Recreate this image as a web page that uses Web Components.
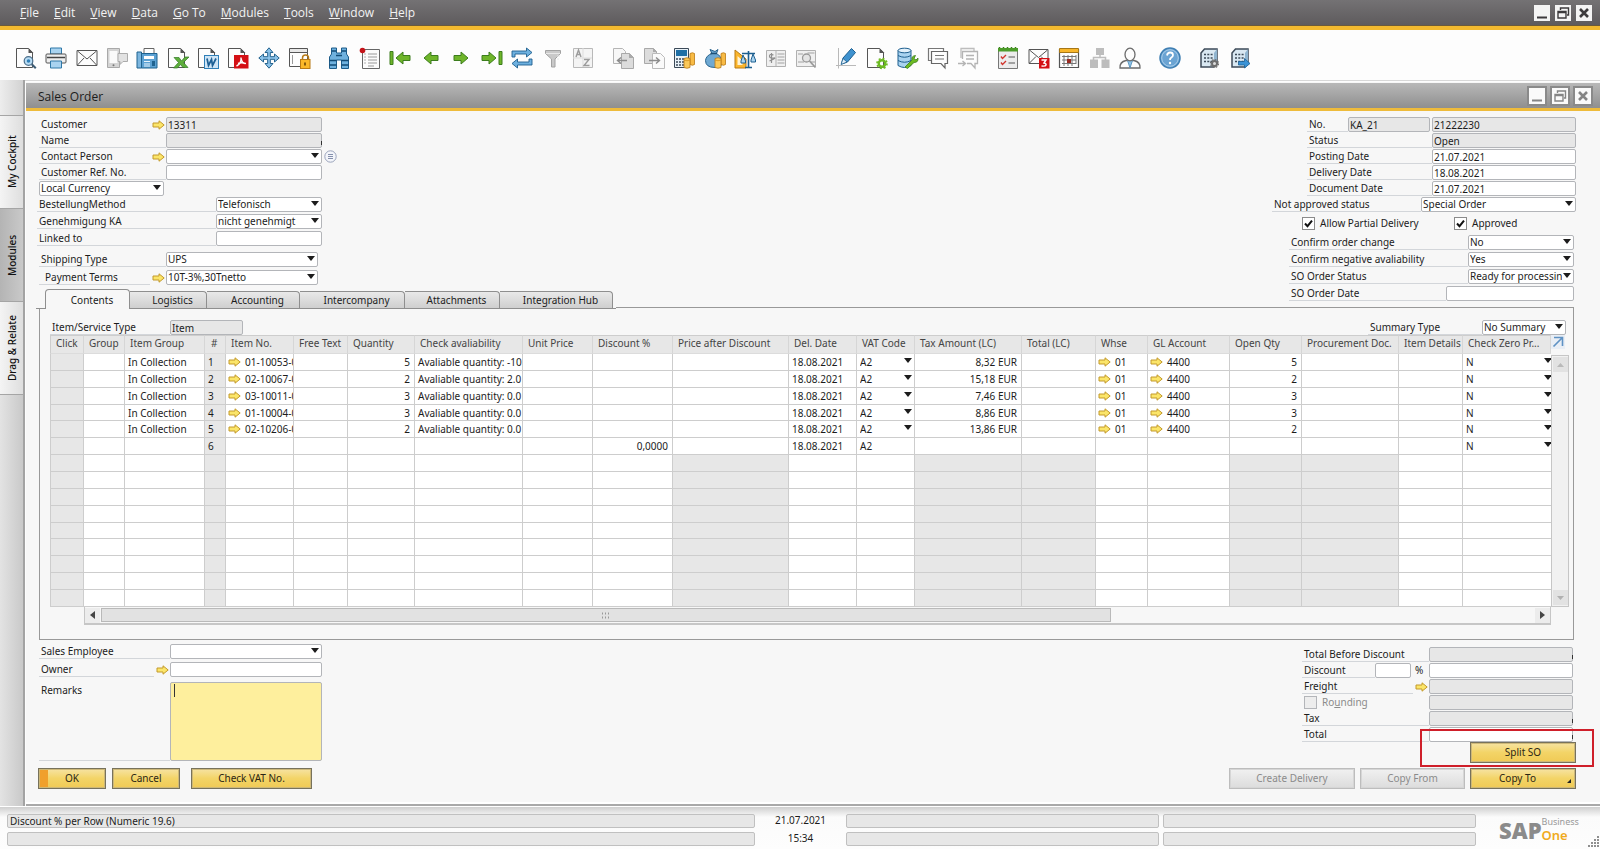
<!DOCTYPE html>
<html lang="en">
<head>
<meta charset="utf-8">
<title>Sales Order</title>
<style>
  html, body { margin: 0; }
  body {
    min-height: 100vh;
    display: flex;
    flex-direction: column;
    background: #fdfdfd;
    color: #1c1c1c;
    font: 10px/14px "Noto Sans", "Open Sans", sans-serif;
  }
  .desk { flex: 1; display: flex; padding-top: 1px; border-top: 1px solid #d8d8d8; }
  sb-window { flex: 1; min-width: 0; }
</style>
</head>
<body>
<sb-menu-bar></sb-menu-bar>
<sb-toolbar></sb-toolbar>
<div class="desk">
  <sb-side-tabs></sb-side-tabs>
  <sb-window heading="Sales Order">
    <sales-order></sales-order>
  </sb-window>
</div>
<sb-status-bar></sb-status-bar>

<script>
const define = (name, html) => customElements.define(name, class extends HTMLElement {
  connectedCallback() {
    if (this.shadowRoot) return;
    const t = document.createElement('template');
    t.innerHTML = typeof html === 'function' ? html(this) : html;
    this.attachShadow({ mode: 'open' }).append(t.content.cloneNode(true));
  }
});

/* ---------- small shared drawings ---------- */
const ARROW = `<svg width="13" height="10" viewBox="0 0 13 10" aria-hidden="true"><path d="M1 3h6V.8L12.2 5 7 9.2V7H1z" fill="#fbe569" stroke="#c39a2c" stroke-width="1"/></svg>`;
const CARET = `<svg class="caret" width="8" height="5" viewBox="0 0 8 5" aria-hidden="true"><path d="M0 0h8L4 5z" fill="#1c1c1c"/></svg>`;

/* ---------- window buttons ---------- */
define('sb-win-buttons', `
<style>
  :host { display: flex; gap: var(--gap, 5px); --s: 16px; color: #3c3a3c; }
  :host([inner]) { --s: 20px; --gap: 3px; color: #858585; }
  button { width: var(--s); height: var(--s); padding: 0; border: 0; background: #f4f4f4; color: inherit; display: grid; place-items: center; }
  :host([inner]) button { border: 2px solid #8a8a8a; box-sizing: border-box; background: #fafafa; }
  svg { display: block; }
</style>
<button aria-label="Minimize"><svg width="14" height="14" viewBox="0 0 14 14"><path d="M2 11.5h10" stroke="currentColor" stroke-width="2"/></svg></button>
<button aria-label="Restore"><svg width="14" height="14" viewBox="0 0 14 14"><path d="M4.500 4V2h8v7H11M2 5.500h8V12H2zM2 6.500h8" fill="none" stroke="currentColor" stroke-width="1.400"/></svg></button>
<button aria-label="Close"><svg width="14" height="14" viewBox="0 0 14 14"><path d="M3 3l8 8M11 3l-8 8" stroke="currentColor" stroke-width="2.600"/></svg></button>`);

/* ---------- menu bar ---------- */
define('sb-menu-bar', `
<style>
  :host { display: flex; align-items: center; justify-content: space-between; height: 26px; padding: 0 8px 0 20px;
    background: linear-gradient(#747274, #5d5a5c); border-bottom: 1px solid #c9982c; box-shadow: inset 0 -1px #6b5a3a; position: relative; }
  :host::after { content: ""; position: absolute; left: 0; right: 0; top: 100%; height: 4px; background: #f2b92f; }
  nav { display: flex; gap: 15px; font: 12px/26px "Open Sans", "Noto Sans", sans-serif; }
  a { color: #f3f3f3; text-decoration: none; }
</style>
<nav>
  <a href="#"><u>F</u>ile</a><a href="#"><u>E</u>dit</a><a href="#"><u>V</u>iew</a><a href="#"><u>D</u>ata</a><a href="#"><u>G</u>o To</a>
  <a href="#"><u>M</u>odules</a><a href="#"><u>T</u>ools</a><a href="#"><u>W</u>indow</a><a href="#"><u>H</u>elp</a>
</nav>
<sb-win-buttons></sb-win-buttons>`);

/* ---------- toolbar ---------- */
const page = (s = '#555') => `<path d="M1.500 1.500h12l4 4v15h-16z" fill="#fdfdfd" stroke="${s}"/><path d="M13.500 1v5h5z" fill="${s}"/>`;
const coins = `<path d="M17 6.500q2.500-1.500 4.500 0v11q-2 1.500-4.500 0z" fill="#f8bb45" stroke="#b97a14" stroke-width=".8"/><path d="M11 11.500q3-1.500 6 0v9q-3 1.500-6 0z" fill="#fbc95a" stroke="#b97a14" stroke-width=".8"/><path d="M11 13q3 1.500 6 0" fill="none" stroke="#d08f1c" stroke-width=".8"/>`;
const G = 'fill="#6fb52a" stroke="#3c7d1d" stroke-width="1"';
const server = `<path d="M2 6l3.500-4H18v14.500L15 20H2z" fill="#d9e8f2" stroke="#3c4a58" stroke-width="1.500"/><path d="M15 6l3-4v14l-3 3z" fill="#8fb4cf"/><path d="M5 7.500h9M5 11h9M5 14.500h9" stroke="#3c4a58" stroke-width="1.500" stroke-dasharray="2 1.300"/>`;
const grid = (c) => `<path d="M1.500 1.500h19v19h-19z" fill="#f4f4f4" stroke="${c}"/>`;
const ICONS = {
  preview: page() + `<circle cx="13.500" cy="14" r="4.300" fill="#b9dcf3" stroke="#4b6f8c" stroke-width="1.200"/><circle cx="13.500" cy="14" r="1.800" fill="#2f7fb8"/><path d="M16.800 17.300l4 4" stroke="#3d5c74" stroke-width="2"/>`,
  print: `<path d="M5.500 1h11v6h-11z" fill="#a9d3f0" stroke="#2f78a8"/><rect x="1" y="7" width="20" height="9" rx="1" fill="#efefef" stroke="#555"/><path d="M2 10.500h18" stroke="#444" stroke-width="1.500"/><path d="M5.500 14h11v7h-11z" fill="#a9d3f0" stroke="#2f78a8"/>`,
  mail: `<path d="M1 3.500h20v15H1z" fill="#fdfdfd" stroke="#555"/><path d="M1.500 4l9.500 8 9.500-8M1.500 18l6.500-7M20.500 18L14 11" fill="none" stroke="#555"/>`,
  sms: `<path d="M1.500 1.500h12v19h-12z" fill="#d4d4d4" stroke="#a9a9a9"/><path d="M3.500 4h8v12h-8z" fill="#fafafa"/><path d="M12 6.500h9.500v8H17l-3 3v-3h-2z" fill="#e2e2e2" stroke="#ababab"/><circle cx="7.500" cy="18.300" r="1" fill="#777"/>`,
  fax: `<path d="M8 1.500h10V8H8z" fill="#fff" stroke="#666"/><path d="M1 5h4.500v16H1z" fill="#7cb6df" stroke="#1f628f"/><path d="M5.500 6.500H21V21H5.500z" fill="#5ba1d3" stroke="#1f628f"/><path d="M8 9h10v3H8z" fill="#fff"/><path d="M8 14.500h6M8 17h6M8 19h6" stroke="#e8f3fb" stroke-width="1.200"/><path d="M16 14h3v5h-3z" fill="#1f628f"/>`,
  excel: page() + `<path d="M7 10.500h5l2.500 3.500 3.500-4h4l-5.500 5.500L21 20.500h-5l-2.500-3-3 3.500H6.500l5-5.500z" fill="#5fae3c" stroke="#2e7a22" stroke-width=".7"/>`,
  word: page() + `<rect x="7.500" y="8.500" width="14" height="13" fill="#cfe5f6" stroke="#2f7fb8"/><path d="M10 11.500l1.500 7 3-6 1 6 3.500-7" fill="none" stroke="#1c5f95" stroke-width="1.700"/>`,
  pdf: page() + `<rect x="7" y="8" width="14.500" height="13.500" fill="#d40f14"/><path d="M14 10.500c.5 4-1.500 7-4.500 8.500M14 11c.5 3.500 2 5.500 5 5.500M11 16.500q4-1.500 7 0" fill="none" stroke="#fff" stroke-width="1.400"/>`,
  move: `<path d="M11 .8l4 4.700h-2.700v4.200h4.200V7l4.700 4-4.700 4v-2.700h-4.200v4.200H15l-4 4.700-4-4.700h2.700v-4.200H5.500V15L.8 11l4.700-4v2.700h4.200V5.500H7z" fill="#8cc3ea" stroke="#22628e"/>`,
  lock: `<path d="M1.500 2.500h18v17h-18z" fill="#fdfdfd" stroke="#555"/><path d="M1.500 1.500h18v4h-18z" fill="#e8e8e8" stroke="#555"/><path d="M4.500 8v9" stroke="#999"/><path d="M14.500 13v-2a3 3 0 0 1 6 0v2" fill="none" stroke="#b87a16" stroke-width="1.500"/><rect x="12.500" y="12.500" width="9.500" height="9" fill="#fbb829" stroke="#b87a16"/><path d="M17 15.500v3" stroke="#6b4505" stroke-width="1.600"/>`,
  find: `<path d="M3.500 1h5v5h5V1h5v6l2 3v11.500h-7V13h-5v8.500h-7V10l2-3z" fill="#6fb1de" stroke="#1d5c8a"/><path d="M1.500 13.500h7M13.500 13.500h7M1.500 18h7M13.500 18h7M8 8.500h6M4 4h4M14 4h4" stroke="#134b75" stroke-width="1.300"/>`,
  list: `<path d="M3.500 2.500h17v19h-17z" fill="#fbfbfb" stroke="#666"/><path d="M9 7h9M9 10h9M9 13h9M9 16h9M9 19h6" stroke="#999"/><path d="M5.500 7h1M5.500 10h1M5.500 13h1M5.500 16h1" stroke="#666"/><circle cx="3.500" cy="3.500" r="2.800" fill="#c4141a"/>`,
  first: `<path d="M1 4.500h3v13H1z" ${G}/><path d="M7 11l7-6V8.500h7v5h-7V17z" ${G}/>`,
  prev: `<path d="M4 11l7-6V8.500h7v5h-7V17z" ${G}/>`,
  next: `<path d="M18 11l-7-6V8.500H4v5h7V17z" ${G}/>`,
  last: `<path d="M18 4.500h3v13h-3z" ${G}/><path d="M15 11L8 5V8.500H1v5h7V17z" ${G}/>`,
  refresh: `<path d="M1 10V4h14.500V1L21 5.500 15.500 10V7H4v3z" fill="#6db0df" stroke="#1d5f8f" stroke-width=".9"/><path d="M21 12v6H6.500v3L1 16.500 6.500 12v3H18v-3z" fill="#6db0df" stroke="#1d5f8f" stroke-width=".9"/>`,
  filter: `<path d="M3.500 3.500h15v3L13 12v8h-3.500v-8L3.500 6.500z" fill="#c9c9c9" stroke="#a2a2a2"/><path d="M4 6.500h14M15 9h3M15 12h2" stroke="#e8e8e8"/>`,
  sort: grid('#b9b9b9') + `<path d="M11 1v19M1 11h19" stroke="#ddd"/><path d="M4 10l2.500-7L9 10M5 7.500h3" fill="none" stroke="#9b9b9b" stroke-width="1.400"/><path d="M12 12.500h5l-5 6h5.500" fill="none" stroke="#9b9b9b" stroke-width="1.400"/>`,
  copyfrom: `<path d="M1.500 1.500h9l3 3v12h-12z" fill="#f7f7f7" stroke="#b5b5b5"/><path d="M9.500 6.500h8l4 4v11h-12z" fill="#dcdcdc" stroke="#a9a9a9"/><path d="M17 6v5h5z" fill="#aaa"/><path d="M15 13.500H6M9 10.500l-3.500 3L9 16.500" fill="none" stroke="#8c8c8c" stroke-width="1.400"/>`,
  copyto: `<path d="M1.500 1.500h9l3 3v12h-12z" fill="#dcdcdc" stroke="#a9a9a9"/><path d="M10 1v4h4z" fill="#aaa"/><path d="M9.500 6.500h8l4 4v11h-12z" fill="#fafafa" stroke="#bbb"/><path d="M6 13.500h10M13 10.500l3.500 3-3.500 3" fill="none" stroke="#8c8c8c" stroke-width="1.400"/>`,
  calc: `<path d="M1.500 1.500h14v19h-14z" fill="#e9f2f8" stroke="#3c4a58"/><path d="M3 3h11v6H3z" fill="#1f6fa5"/><path d="M3 12h8M3 15h8M3 18h8" stroke="#3c4a58" stroke-width="1.500" stroke-dasharray="2 1"/>` + coins,
  profit: `<path d="M6 2.500l5 2 3-2-1.500 4q5 2.500 5.500 9 0 5-7 5-9.500 0-9.500-7 .5-5 6.500-7z" fill="#6fa9d3" stroke="#2a658f"/><path d="M6.500 6.500h6.500" stroke="#1d5077" stroke-width="1.500"/>` + coins,
  scale: `<path d="M1 3l11 9v9H1z" fill="#fbb62c" stroke="#b97a14"/><path d="M3.500 9l5 4.500v4.500h-5z" fill="#fff3d5"/><path d="M8 6.500h13M14.500 4v16M11 20.500h7" stroke="#1d5f8f" stroke-width="1.600"/><path d="M7 14l2-6 2.500 6v2H7zM17 13l2-6 2.500 6v2H17z" fill="#a9d3f0" stroke="#1d5f8f"/>`,
  ledger: `<path d="M1.500 3.500h19v16h-19z" fill="#f0f0f0" stroke="#b0b0b0"/><path d="M11 4v15" stroke="#b0b0b0"/><path d="M12.500 7h7M12.500 10h7M12.500 13h7M12.500 16h7" stroke="#bcbcbc" stroke-width="1.500"/><path d="M8.500 8q-4-1.500-4 1t4 2-4 3M6.500 6v10" fill="none" stroke="#8f8f8f" stroke-width="1.200"/>`,
  ledgerfind: `<path d="M1.500 3.500h19v16h-19z" fill="#f0f0f0" stroke="#b0b0b0"/><path d="M3 7h5M12.500 6h7M3 15h6M16 15h4" stroke="#bcbcbc" stroke-width="1.500"/><circle cx="11.500" cy="11" r="4" fill="#e4e4e4" stroke="#999" stroke-width="1.300"/><path d="M14.500 14l6 6.500" stroke="#999" stroke-width="1.800"/>`,
  edit: `<path d="M3.500 1v20.500M1 18.500h20" stroke="#b9b9b9"/><path d="M8 11L16.500 1.500l4 4L12.500 15l-6 2z" fill="#3f92cf" stroke="#1d5f8f"/><path d="M6 17.500l2-6 4 3.500z" fill="#e0eef8" stroke="#1d5f8f" stroke-width=".8"/>`,
  newdoc: page() + `<circle cx="16" cy="16.500" r="3.300" fill="none" stroke="#6dbb22" stroke-width="2.400"/><circle cx="16" cy="16.500" r="5" fill="none" stroke="#6dbb22" stroke-width="1.600" stroke-dasharray="2 1.900"/>`,
  dbtool: `<path d="M2 3.500v15q6.500 4 13 0v-15z" fill="#a9d3f0" stroke="#1d5f8f"/><ellipse cx="8.500" cy="3.500" rx="6.500" ry="2.300" fill="#e3f1fb" stroke="#1d5f8f"/><path d="M2 8.500q6.500 3.500 13 0M2 13.500q6.500 3.500 13 0" fill="none" stroke="#1d5f8f"/><path d="M9 20l7-7q-1-4 3.500-4.500l-1.500 3 2 1.500 2-2q.5 4.500-4 4.500l-6.500 6z" fill="#6dbb22" stroke="#3c7d1d" stroke-width=".8"/>`,
  chat: `<path d="M4 13.500H1.500v-12h15V4" fill="none" stroke="#777" stroke-width="1.200"/><path d="M4.500 4.500h16v12H18V21l-4-4.500H4.500z" fill="#fdfdfd" stroke="#666" stroke-width="1.200"/><path d="M8 8.500h9M8 12h9" stroke="#777" stroke-width="1.200"/>`,
  chatto: `<path d="M4 11V1.500h13V4" fill="none" stroke="#bdbdbd" stroke-width="1.300"/><path d="M5.500 12V4.500h15v12H18V21l-4-4.500h-4" fill="none" stroke="#b4b4b4" stroke-width="1.300"/><path d="M9 8.500h8M9 12h8M1 16.500h7M5.500 14l3 2.500-3 2.500" fill="none" stroke="#b4b4b4" stroke-width="1.300"/>`,
  tasks: `<path d="M1.500 2.500h19v19h-19z" fill="#ececec" stroke="#777"/><path d="M1 1h20v3.500H1z" fill="#4c9c2a"/><path d="M2.500 1v-1M6.500 1v-1M10.500 1v-1M14.500 1v-1M18.500 1v-1" stroke="#3c7d1d" stroke-width="1.500"/><path d="M4 9.500l1.500 2L9 8M4 15.500l1.500 2L9 14" fill="none" stroke="#d0342c" stroke-width="1.400"/><path d="M11.500 10h6.500M11.500 16h6.500" stroke="#888" stroke-width="1.300"/>`,
  inbox: `<path d="M1 2.500h19v14H1z" fill="#fdfdfd" stroke="#555"/><path d="M1.500 3l9 7.500 9-7.500M1.500 16L8 9.500M19.500 16L13 9.500" fill="none" stroke="#555"/><rect x="11" y="11" width="10.500" height="10.500" fill="#d40f14"/><path d="M13.500 13h4.500l-2 3q2.500.5 2 2t-4.500 1" fill="none" stroke="#fff" stroke-width="1.500"/>`,
  calendar: `<path d="M1.500 2.500h19v18h-19z" fill="#fdfdfd" stroke="#555" stroke-width="1.200"/><path d="M1.500 1.500h19v4h-19z" fill="#f8b62a" stroke="#a77717"/><path d="M4 9.500h14M4 13h14M4 16.500h14M6 8v11M10 8v11M14 8v11M18 8v9" stroke="#777"/><path d="M9 12h4v4H9z" fill="#9a2a22"/>`,
  org: `<path d="M7 1h8v7H7zM1 12.500h8V21H1zM12.500 12.500h8V21h-8z" fill="#bdbdbd"/><path d="M11 8v3M4.500 13v-2.500h12V13" fill="none" stroke="#bdbdbd" stroke-width="1.500"/>`,
  person: `<path d="M1 21q-.5-6 6-7.500h8q6.500 1.500 6 7.500z" fill="#fdfdfd" stroke="#6b6b6b" stroke-width="1.300"/><path d="M8.500 13.500L11 21l2.500-7.500z" fill="#8cc3ea" stroke="#4d86b0" stroke-width=".8"/><ellipse cx="11" cy="7.500" rx="5" ry="6.300" fill="#fdfdfd" stroke="#6b6b6b" stroke-width="1.300"/>`,
  help: `<circle cx="11" cy="11" r="10" fill="#6ba4d3" stroke="#3f7fb3" stroke-width="1.500"/><circle cx="11" cy="11" r="8.300" fill="none" stroke="#a9cdea"/><path d="M8 8.500q.5-3 3.200-3t2.800 2.500q0 1.500-1.600 2.500T11 13" fill="none" stroke="#fff" stroke-width="1.800"/><circle cx="11" cy="16" r="1.200" fill="#fff"/>`,
  serverset: server + `<circle cx="15.500" cy="16.500" r="2.500" fill="#ddd" stroke="#6e6e6e" stroke-width="2"/><circle cx="15.500" cy="16.500" r="4" fill="none" stroke="#6e6e6e" stroke-width="1.200" stroke-dasharray="1.800 1.300"/>`,
  servergo: server + `<path d="M8.500 14.500h6v-3l5.500 5-5.500 4.500v-3h-6z" fill="#3b93d6" stroke="#1c5f95" stroke-width=".8"/>`
};
define('sb-tool', (el) => `
<style>
  :host { display: block; }
  button { display: block; width: 22px; height: 22px; padding: 0; border: 0; background: none; }
  svg { display: block; overflow: visible; }
</style>
<button aria-label="${el.getAttribute('icon')}"><svg width="22" height="22" viewBox="0 0 22 22">${ICONS[el.getAttribute('icon')]}</svg></button>`);

const GROUPS = [
  [295, 'preview print mail sms fax excel word pdf move lock'],
  [266, 'find list first prev next last refresh filter sort'],
  [205, 'copyfrom copyto calc profit scale ledger ledgerfind'],
  [144, 'edit newdoc dbtool chat chatto'],
  [144, 'tasks inbox calendar org person'],
  [22, 'help'],
  [53, 'serverset servergo']
];
define('sb-toolbar', `
<style>
  :host { display: flex; align-items: center; gap: 18px; box-sizing: border-box; padding: 9px 15px 0; height: 53px; background: #fdfdfd; }
  div { display: flex; justify-content: space-between; }
</style>` + GROUPS.map(([w, names]) =>
  `<div style="width:${w}px">${names.split(' ').map(n => `<sb-tool icon="${n}"></sb-tool>`).join('')}</div>`).join(''));

/* ---------- vertical tabs on the left ---------- */
define('sb-side-tabs', `
<style>
  :host { display: flex; flex-direction: column; width: 23px; padding-top: 35px; margin: -2px 1px 0 0; border-right: 2px solid #a3a3a3;
    background: linear-gradient(90deg, #ededed, #d2d2d2); }
  button { width: 23px; height: 93px; padding: 0; border: 0; border-bottom: 1px solid #a5a5a5; background: linear-gradient(90deg, #dedede, #f4f4f4);
    color: #111; font: 500 10px/22px "Noto Sans", sans-serif; writing-mode: vertical-rl; transform: rotate(180deg); }
  button.on { background: linear-gradient(90deg, #c9c9c9, #b4b4b4); }
  .rest { flex: 1; border-top: 1px solid #a5a5a5; background: linear-gradient(90deg, #e3e3e3, #c9c9c9); }
</style>
<button>My Cockpit</button><button class="on">Modules</button><button>Drag &amp; Relate</button><div class="rest"></div>`);

/* ---------- window frame ---------- */
define('sb-window', (el) => `
<style>
  :host { display: flex; flex-direction: column; background: #f7f7f7; border-bottom: 2px solid #a9a9a9; }
  header { display: flex; align-items: center; justify-content: space-between; height: 25px; padding: 0 7px 0 12px; margin-top: 1px;
    background: linear-gradient(#b8b8b8, #8f8f8f); border-bottom: 3px solid #eebb3b; }
  h1 { margin: 0; padding-top: 2px; font: 12px/22px "Open Sans", "Noto Sans", sans-serif; }
  main { flex: 1; border-bottom: 2px solid #fff; }
</style>
<header><h1>${el.getAttribute('heading')}</h1><sb-win-buttons inner></sb-win-buttons></header>
<main><slot></slot></main>`);

/* ---------- labelled field ---------- */
let uid = 0;
define('sb-field', (el) => {
  const a = (n) => el.getAttribute(n), has = (n) => el.hasAttribute(n), id = 'f' + (++uid);
  const control = has('select')
    ? `<select id="${id}"><option>${a('value') || ''}</option></select>${CARET}`
    : `<input id="${id}" value="${a('value') || ''}" ${has('off') ? 'readonly' : ''}>`;
  const name = a('label')
    ? (has('tick') ? `<span class="label"><input type="checkbox" id="${id}k" disabled><label class="dim" for="${id}k">${a('label')}</label></span>` : `<label class="label" for="${id}">${a('label')}</label>`)
    : '';
  return `
<style>
  :host { display: flex; align-items: stretch; height: 15px; position: relative; color: #1c1c1c; --w: 156px; }
  :host([narrow]) { width: 125px; --w: 125px; }
  .label { flex: 1; min-width: 0; white-space: nowrap; padding-left: 2px; border-bottom: 1px solid #d3d6da; line-height: 14px; height: 14px; display: flex; align-items: center; }
  :host([indent]) .label { padding-left: 6px; }
  :host([tick]) .label { border-color: transparent; gap: 5px; }
  .dim { color: #8b8b8b; }
  .go { padding: 0; border: 0; background: none; width: 16px; display: grid; place-items: center; }
  .ctl { position: relative; width: var(--w); }
  input, select { box-sizing: border-box; width: 100%; height: 15px; margin: 0; padding: 0 1px; border: 1px solid #b3b5b9; border-radius: 2px; background: #fff;
    color: inherit; font: inherit; line-height: 13px; appearance: none; outline: 0; display: block; }
  select { padding: 0 11px 0 1px; }
  input[type=checkbox] { width: 13px; height: 13px; background: #ededed; border-radius: 0; padding: 0; }
  :host([off]) .ctl input, .pre.off { background: #e7e7e7; }
  .caret { position: absolute; right: 3px; top: 4px; pointer-events: none; }
  .pre { width: 82px; margin-right: 2px; }
  .pre.pct { width: 36px; margin-right: 4px; }
  .unit { width: 14px; }
  .list { position: absolute; left: 100%; top: 1px; margin-left: 2px; padding: 0; border: 0; background: none; }
  :host([mark]) .ctl::after { content: ""; position: absolute; right: 0; bottom: 3px; width: 1px; height: 4px; background: #333; }
  svg { display: block; }
</style>
${name}
${a('pre') ? `<input class="pre off" aria-label="Series" value="${a('pre')}" readonly>` : ''}
${has('pct') ? `<input class="pre pct" aria-label="Discount percent"><span class="unit">%</span>` : ''}
${has('go') ? `<button class="go" aria-label="Open record">${ARROW}</button>` : ''}
<div class="ctl">${control}</div>
${has('list') ? `<button class="list" aria-label="Choose from list"><svg width="13" height="13" viewBox="0 0 13 13"><circle cx="6.500" cy="6.500" r="5.700" fill="#f3f5fa" stroke="#9aa3bb"/><path d="M4 4.500h5M4 6.500h5M4 8.500h5" stroke="#8590ad"/></svg></button>` : ''}`;
});

/* ---------- tick box ---------- */
define('sb-check', `
<style>
  :host { display: block; }
  label { display: flex; align-items: center; gap: 5px; }
  span { position: relative; display: block; width: 13px; height: 13px; }
  input { appearance: none; box-sizing: border-box; width: 13px; height: 13px; margin: 0; border: 1px solid #8b8b8b; background: #fff; display: block; }
  svg { position: absolute; left: 0; top: 0; pointer-events: none; }
</style>
<label><span><input type="checkbox" checked><svg width="13" height="13" viewBox="0 0 13 13"><path d="M3 6.500l2.500 2.700 4.500-5.500" fill="none" stroke="#111" stroke-width="2"/></svg></span><slot></slot></label>`);

/* ---------- push button ---------- */
define('sb-button', (el) => `
<style>
  :host { display: block; }
  button { box-sizing: border-box; width: 100%; height: 21px; padding: 0; border: 1px solid #77725c; background: linear-gradient(#f6e3a3, #f3d467 50%, #f0ca55);
    color: #2b2615; font: inherit; line-height: 17px; position: relative; display: block; box-shadow: inset 0 0 0 1px #cdb878; }
  :host([primary]) button { background: linear-gradient(90deg, #f0a02c 9px, transparent 9px), linear-gradient(#f6e3a3, #f3d467 50%, #f0ca55); }
  button:disabled { border-color: #bdbdbd; background: linear-gradient(#f1f1f1, #dcdcdc); color: #8b8b8b; box-shadow: inset 0 0 0 1px #d6d6d6; }
  :host([menu]) button { padding-right: 11px; }
  :host([menu]) button::after { content: ""; position: absolute; right: 4px; bottom: 5px; border: 2px solid #222; border-top-color: transparent; border-left-color: transparent; }
</style>
<button ${el.hasAttribute('off') ? 'disabled' : ''}><slot></slot></button>`);

/* ---------- tab strip ---------- */
define('sb-tabs', `
<style>
  :host { display: flex; align-items: flex-end; height: 18px; padding: 0 3px 0 9px; background: #f7f7f7; border-bottom: 1px solid #8f8f8f; position: relative; z-index: 1; }
  button { box-sizing: border-box; height: 17px; padding: 0 0 0 9px; border: 1px solid #8f8f8f; border-width: 1px 1px 0 0; border-radius: 0 4px 0 0;
    background: linear-gradient(#e9e9e9, #cfcfcf); color: #1c1c1c; font: inherit; line-height: 14px; }
  button.on { height: 20px; margin-bottom: -1px; border-left-width: 1px; border-radius: 4px 4px 0 0; background: #f7f7f7; }
</style>
<button class="on" style="width:85px">Contents</button><button style="width:77px">Logistics</button><button style="width:93px">Accounting</button><button style="width:105px">Intercompany</button><button style="width:95px">Attachments</button><button style="width:113px">Integration Hub</button>`);

/* ---------- item grid ---------- */
const COLS = [
  ['Click', 34, 'g'], ['Group', 41], ['Item Group', 80], ['#', 21, 'g'], ['Item No.', 68], ['Free Text', 54], ['Quantity', 67],
  ['Check avaliability', 108], ['Unit Price', 70], ['Discount %', 80], ['Price after Discount', 116, 'e'], ['Del. Date', 68], ['VAT Code', 58],
  ['Tax Amount (LC)', 107, 'e'], ['Total (LC)', 74, 'e'], ['Whse', 52], ['GL Account', 82], ['Open Qty', 72, 'e'], ['Procurement Doc.', 97, 'e'],
  ['Item Details', 64], ['Check Zero Pr...', 88]
];
const link = (t) => `<a href="#">${ARROW}<span>${t}</span></a>`;
const drop = (t, label) => `<span class="drop"><select aria-label="${label}"><option>${t}</option></select>${CARET}</span>`;
const ITEMS = [
  ['01-10053-0', 5, '-10', '8,32'], ['02-10067-0', 2, '2.0', '15,18'], ['03-10011-0', 3, '0.0', '7,46'],
  ['01-10004-0', 3, '0.0', '8,86'], ['02-10206-0', 2, '0.0', '13,86']
];
const rows = ITEMS.map(([no, q, av, tax], i) => ({
  2: 'In Collection', 3: i + 1, 4: link(no), 6: q, 7: 'Avaliable quantity: ' + av, 11: '18.08.2021', 12: drop('A2', 'VAT Code'),
  13: tax + ' EUR', 15: link('01'), 16: link('4400'), 17: q, 20: drop('N', 'Check zero price')
}));
rows.push({ 3: 6, 9: '0,0000', 11: '18.08.2021', 12: 'A2', 20: drop('N', 'Check zero price') });
while (rows.length < 15) rows.push({});
const NUM = [6, 9, 13, 17];
define('item-grid', `
<style>
  :host { display: grid; grid-template-columns: 1fr 18px; }
  table { width: 100%; height: 272px; border-collapse: separate; border-spacing: 0; table-layout: fixed; }
  th, td { box-sizing: border-box; padding: 0 4px 0 3px; border: 1px solid #cdcdcd; border-width: 0 1px 1px 0; overflow: hidden; white-space: nowrap; text-align: left; font-weight: normal; line-height: 14px; background: #fff; }
  td { height: 16px; }
  th { height: 19px; padding: 0 0 0 5px; vertical-align: top; background: #e7e7e7; color: #444; border-top-width: 1px; border-bottom-color: #dcdcdc; border-right-color: #d6d6d6; }
  th:first-child, td:first-child { border-left-width: 1px; }
  th:nth-child(4) { padding-left: 6px; }
  td.g { background: #e7e7e7; }
  td.n { text-align: right; }
  td:nth-child(5), td:nth-child(13), td:nth-child(21) { padding-right: 0; }
  td:nth-child(21) { border-right: 0; }
  a { display: flex; align-items: center; gap: 4px; margin-left: -1px; color: inherit; text-decoration: none; }
  a svg { flex: none; }
  .drop { position: relative; display: block; }
  .drop select { width: 100%; height: 14px; margin: 0; padding: 0; border: 0; background: none; font: inherit; color: inherit; appearance: none; display: block; }
  .drop .caret { position: absolute; right: 2px; top: 3px; }
  td:nth-child(21) .caret { right: -1px; }
  .side { display: flex; flex-direction: column; }
  .expand { width: 14px; height: 14px; margin: 0 0 6px 0; padding: 0; border: 0; background: #e9eef5; }
  .v { flex: 1; display: flex; flex-direction: column; justify-content: space-between; border: 1px solid #c6c6c6; background: #f1f1f1; padding: 1px; }
  .v button, .h button { width: 15px; height: 15px; padding: 0; border: 0; background: #e2e2e2; display: grid; place-items: center; }
  .h { display: flex; align-items: center; height: 16px; margin-left: 34px; border: 1px solid #c6c6c6; border-width: 0 1px 2px 1px; background: #f7f7f7; }
  .h button { background: #ececec; }
  .track { flex: 1; padding: 0 1px; }
  .thumb { box-sizing: border-box; width: 1010px; max-width: 71%; height: 14px; border: 1px solid #b9b9b9; background: #e2e2e2; display: grid; place-items: center; }
  svg { display: block; }
</style>
<table>
  <colgroup>${COLS.map(c => `<col style="width:${c[1]}px">`).join('')}</colgroup>
  <thead><tr>${COLS.map(c => `<th>${c[0]}</th>`).join('')}</tr></thead>
  <tbody>${rows.map((r, i) => `<tr>${COLS.map((c, j) => {
    const k = (c[2] === 'g' || (c[2] === 'e' && i > 5) ? 'g ' : '') + (NUM.includes(j) ? 'n' : '');
    return `<td class="${k}">${r[j] ?? ''}</td>`;
  }).join('')}</tr>`).join('')}</tbody>
</table>
<div class="side">
  <button class="expand" aria-label="Expand"><svg width="14" height="14" viewBox="0 0 14 14"><path d="M3 2.500h8.500V11M11 3L2.500 11.500" fill="none" stroke="#5f92c4" stroke-width="1.600"/></svg></button>
  <div class="v">
    <button aria-label="Scroll up"><svg width="7" height="4" viewBox="0 0 7 4"><path d="M0 4l3.500-4L7 4z" fill="#b9b9b9"/></svg></button>
    <button aria-label="Scroll down"><svg width="7" height="4" viewBox="0 0 7 4"><path d="M0 0h7L3.500 4z" fill="#b0b0b0"/></svg></button>
  </div>
</div>
<div class="h">
  <button aria-label="Scroll left"><svg width="5" height="8" viewBox="0 0 5 8"><path d="M5 0v8L0 4z" fill="#444"/></svg></button>
  <div class="track"><div class="thumb"><svg width="9" height="7" viewBox="0 0 9 7"><path d="M0 1.500h9M0 5.500h9" stroke="#999" stroke-width="2" stroke-dasharray="1 2"/></svg></div></div>
  <button aria-label="Scroll right"><svg width="5" height="8" viewBox="0 0 5 8"><path d="M0 0v8l5-4z" fill="#444"/></svg></button>
</div>`);

/* ---------- the sales order form ---------- */
define('sales-order', `
<style>
  :host { display: block; padding: 6px 24px 10px 10px; }
  .top { display: grid; grid-template: auto auto / auto 1fr auto; }
  .left { width: 288px; height: 173px; }
  .right { grid-area: 1 / 3 / 3 / 4; display: flex; flex-direction: column; align-items: flex-end; height: 187px; }
  .g { display: flex; flex-direction: column; gap: 1px; }
  .roomy { gap: 2px; }
  .cust { margin-left: 3px; width: 283px; }
  .order { margin: 1px 0 6px 1px; width: 285px; }
  .ship { margin-left: 3px; width: 279px; gap: 3px; }
  .order sb-field { --w: 106px; }
  .ship sb-field { --w: 152px; }
  .dates { width: 269px; }
  .dates sb-field { --w: 144px; }
  .appr { width: 304px; margin-top: 1px; --w: 155px; }
  .checks { display: flex; width: 274px; margin: 4px 0 5px; }
  .checks sb-check:first-child { width: 152px; }
  .confirm { width: 285px; margin-right: 2px; }
  .confirm sb-field { --w: 106px; }
  .confirm sb-field:last-child { --w: 128px; }
  sb-tabs { grid-row: 2; }
  .panel { border: 1px solid #999; margin: -2px 2px 0 3px; padding: 12px 4px 14px 10px; }
  .bar { display: flex; justify-content: space-between; }
  .bar sb-field { --w: 73px; width: 193px; }
  .bar sb-field:last-child { --w: 84px; width: 198px; margin-right: 3px; }
  .bottom { display: flex; justify-content: space-between; padding-top: 4px; }
  .emp { width: 283px; margin-left: 3px; gap: 3px; }
  .emp sb-field { --w: 152px; }
  .remarks { display: flex; margin-top: 2px; }
  .remarks label { flex: 1; padding: 1px 0 0 2px; border-bottom: 1px solid #d3d6da; }
  textarea { box-sizing: border-box; width: 152px; height: 79px; margin: 0; padding: 3px 6px; border: 1px solid #b3b5b9; border-radius: 2px; resize: none; font: inherit; outline: 0; display: block;
    background: linear-gradient(#333, #333) 3px 1px / 1px 13px no-repeat #feef9d; }
  .btns { display: flex; margin: 7px 0 0 2px; gap: 6px; }
  .far { margin-left: 5px; }
  .sum { width: 271px; margin: 3px 3px 0 0; }
  .sum sb-field { --w: 144px; }
  .r { display: flex; flex-direction: column; align-items: flex-end; }
  .r .btns { gap: 5px; margin-top: 5px; }
  .split { position: relative; width: 106px; }
  .split::after { content: ""; position: absolute; inset: -13px -18px -4px -50px; border: 2px solid #cf1f2a; pointer-events: none; }
</style>
<div class="top">
  <div class="left">
    <div class="g cust">
      <sb-field label="Customer" value="13311" off go></sb-field>
      <sb-field label="Name" off mark></sb-field>
      <sb-field label="Contact Person" select go list></sb-field>
      <sb-field label="Customer Ref. No."></sb-field>
      <sb-field select value="Local Currency" narrow></sb-field>
    </div>
    <div class="g roomy order">
      <sb-field label="BestellungMethod" select value="Telefonisch"></sb-field>
      <sb-field label="Genehmigung KA" select value="nicht genehmigt"></sb-field>
      <sb-field label="Linked to"></sb-field>
    </div>
    <div class="g ship">
      <sb-field label="Shipping Type" select value="UPS"></sb-field>
      <sb-field label="Payment Terms" select value="10T-3%,30Tnetto" go indent></sb-field>
    </div>
  </div>
  <sb-tabs></sb-tabs>
  <div class="right">
    <div class="g dates">
      <sb-field label="No." pre="KA_21" value="21222230" off></sb-field>
      <sb-field label="Status" value="Open" off></sb-field>
      <sb-field label="Posting Date" value="21.07.2021"></sb-field>
      <sb-field label="Delivery Date" value="18.08.2021"></sb-field>
      <sb-field label="Document Date" value="21.07.2021"></sb-field>
    </div>
    <sb-field class="appr" label="Not approved status" select value="Special Order"></sb-field>
    <div class="checks"><sb-check>Allow Partial Delivery</sb-check><sb-check>Approved</sb-check></div>
    <div class="g roomy confirm">
      <sb-field label="Confirm order change" select value="No"></sb-field>
      <sb-field label="Confirm negative avaliability" select value="Yes"></sb-field>
      <sb-field label="SO Order Status" select value="Ready for processing"></sb-field>
      <sb-field label="SO Order Date"></sb-field>
    </div>
  </div>
</div>
<div class="panel">
  <div class="bar">
    <sb-field label="Item/Service Type" value="Item" off></sb-field>
    <sb-field label="Summary Type" select value="No Summary"></sb-field>
  </div>
  <item-grid></item-grid>
</div>
<div class="bottom">
  <div>
    <div class="g emp">
      <sb-field label="Sales Employee" select></sb-field>
      <sb-field label="Owner" go></sb-field>
      <div class="remarks"><label for="rem">Remarks</label><textarea id="rem"></textarea></div>
    </div>
    <div class="btns">
      <sb-button primary style="width:68px">OK</sb-button><sb-button style="width:68px">Cancel</sb-button><sb-button class="far" style="width:121px">Check VAT No.</sb-button>
    </div>
  </div>
  <div class="r">
    <div class="g sum">
      <sb-field label="Total Before Discount" off mark></sb-field>
      <sb-field label="Discount" pct></sb-field>
      <sb-field label="Freight" off go></sb-field>
      <sb-field label="Ro&lt;u&gt;u&lt;/u&gt;nding" tick off></sb-field>
      <sb-field label="Tax" off mark></sb-field>
      <sb-field label="Total" mark></sb-field>
    </div>
    <sb-button class="split">Split SO</sb-button>
    <div class="btns">
      <sb-button off style="width:126px">Create Delivery</sb-button><sb-button off style="width:105px">Copy From</sb-button><sb-button menu style="width:106px">Copy To</sb-button>
    </div>
  </div>
</div>`);

/* ---------- status bar ---------- */
define('sb-status-bar', `
<style>
  :host { display: flex; gap: 4px; padding: 7px 0 3px 7px; background: linear-gradient(#cfcfcf, #fbfbfb 10px, #fdfdfd); position: relative; border-top: 1px solid #fff; }
  .col { display: flex; flex-direction: column; gap: 4px; flex: 313; }
  .msg { flex: 748; }
  .when { flex: none; width: 83px; text-align: center; }
  .col > * { box-sizing: border-box; height: 14px; line-height: 12px; }
  .col > div { border: 1px solid #c0c0c0; border-radius: 2px; background: #e7e7e7; padding-left: 2px; }
  .logo { width: 120px; display: flex; align-items: center; padding-left: 19px; box-sizing: border-box; height: 32px; }
  .sap { font: 800 22px/26px "Open Sans", "Noto Sans", sans-serif; color: #8b8b8b; }
  .bo { display: flex; flex-direction: column; font-size: 9px; line-height: 12px; color: #999; }
  .bo b { font-size: 13px; line-height: 18px; margin-top: -2px; color: #f0ab1e; font-weight: 600; }
  svg { position: absolute; right: 0; bottom: 0; }
</style>
<div class="col msg"><div>Discount % per Row (Numeric 19.6)</div><div></div></div>
<div class="col when"><span>21.07.2021</span><span>15:34</span></div>
<div class="col"><div></div><div></div></div>
<div class="col"><div></div><div></div></div>
<div class="logo"><span class="sap">SAP</span><span class="bo"><span>Business</span><b>One</b></span></div>
<svg width="13" height="13" viewBox="0 0 13 13" aria-hidden="true"><path d="M10 1h2M7 4h5M4 7h8M1 10h11" stroke="#8f8f8f" stroke-width="2" stroke-dasharray="2 1"/></svg>`);
</script>
</body>
</html>
